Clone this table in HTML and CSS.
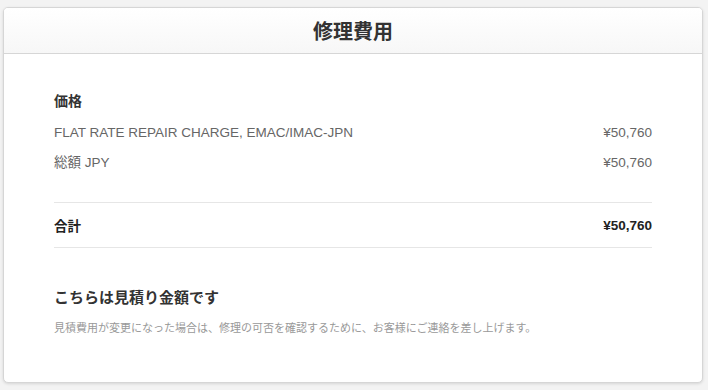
FILE: index.html
```html
<!DOCTYPE html>
<html lang="ja">
<head>
<meta charset="utf-8">
<link rel="stylesheet" href="styles.css">
</head>
<body>
<div class="card">
  <div class="card-header"><h1 class="title">修理費用</h1></div>
  <div class="card-body">
    <h2 class="section-title">価格</h2>
    <div class="row"><span>FLAT RATE REPAIR CHARGE, EMAC/IMAC-JPN</span><span>¥50,760</span></div>
    <div class="row"><span>総額 JPY</span><span>¥50,760</span></div>
    <div class="total"><span>合計</span><span>¥50,760</span></div>
    <h2 class="note-title">こちらは見積り金額です</h2>
    <p class="note">見積費用が変更になった場合は、修理の可否を確認するために、お客様にご連絡を差し上げます。</p>
  </div>
</div>
</body>
</html>
```
FILE: styles.css
```css
html, body { margin: 0; padding: 0; }
body {
  background: #f3f3f3;
  font-family: "Liberation Sans", Arial, "Noto Sans CJK JP", sans-serif;
  padding: 7px 5px 0 3px;
  height: 390px;
  box-sizing: border-box;
}
.card {
  background: #fff;
  border: 1px solid #d6d6d6;
  border-radius: 5px;
  height: 376px;
  box-sizing: border-box;
  box-shadow: 0 1px 3px rgba(0,0,0,0.12);
  overflow: hidden;
}
.card-header {
  height: 45px;
  border-bottom: 1px solid #d6d6d6;
  background: linear-gradient(#fff, #f7f7f7);
  display: flex;
  align-items: center;
  justify-content: center;
}
.title {
  margin: 0;
  font-size: 20px;
  font-weight: bold;
  color: #333;
}
.card-body {
  padding: 38px 50px 0 50px;
}
.section-title {
  margin: 0 0 15px;
  font-size: 14px;
  font-weight: bold;
  color: #333;
  line-height: 18px;
}
.row {
  display: flex;
  justify-content: space-between;
  font-size: 13.5px;
  color: #666;
  line-height: 16px;
  margin-bottom: 14px;
}
.total {
  margin-top: 31px;
  border-top: 1px solid #e6e6e6;
  border-bottom: 1px solid #e6e6e6;
  height: 44px;
  display: flex;
  justify-content: space-between;
  align-items: center;
  font-size: 13.5px;
  font-weight: bold;
  color: #222;
}
.note-title {
  margin: 40px 0 0;
  font-size: 15px;
  font-weight: bold;
  color: #333;
  line-height: 20px;
}
.note {
  margin: 13px 0 0;
  font-size: 11px;
  color: #999;
  line-height: 14px;
}
```
